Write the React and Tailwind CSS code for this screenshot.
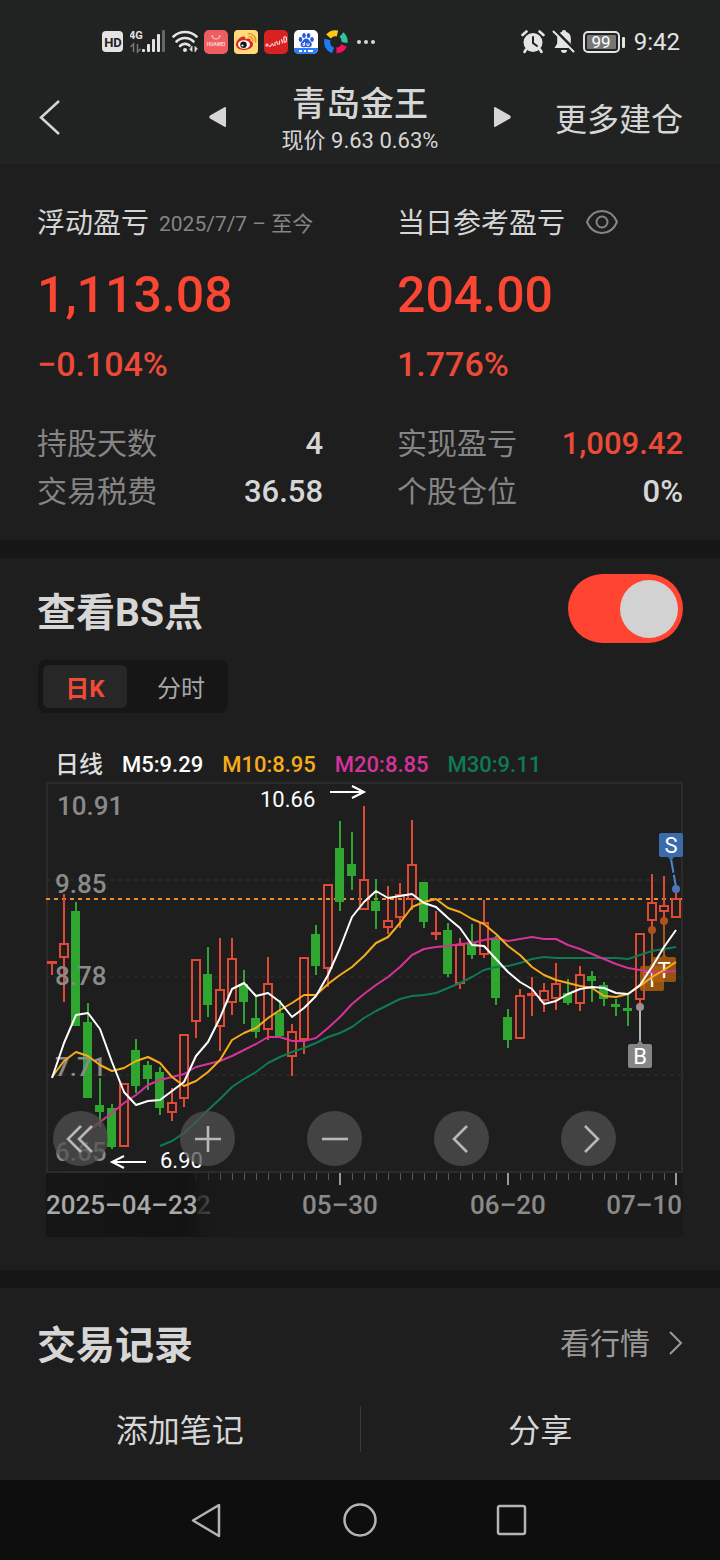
import React, { useState } from "react";

// x, high, body top, body bottom, low, 1 = rise (hollow red) / 0 = fall (green)
const candles = [
  [52, 961, 961, 964, 975, 1],
  [64, 894, 943, 958, 1002, 1],
  [76, 902, 911, 1026, 1026, 0],
  [88, 1003, 1022, 1098, 1098, 0],
  [100, 1078, 1105, 1112, 1127, 0],
  [112, 1104, 1108, 1147, 1149, 0],
  [124, 1083, 1083, 1147, 1147, 1],
  [136, 1039, 1050, 1086, 1093, 0],
  [148, 1061, 1065, 1079, 1090, 0],
  [160, 1067, 1072, 1108, 1115, 0],
  [172, 1088, 1102, 1113, 1121, 1],
  [184, 1034, 1034, 1099, 1107, 1],
  [196, 959, 959, 1022, 1038, 1],
  [208, 947, 974, 1005, 1017, 0],
  [220, 938, 989, 1027, 1051, 1],
  [232, 938, 958, 1003, 1015, 1],
  [244, 970, 984, 1002, 1024, 0],
  [256, 995, 1018, 1032, 1038, 0],
  [268, 957, 983, 1030, 1040, 1],
  [280, 1000, 1013, 1036, 1036, 0],
  [292, 1024, 1031, 1057, 1076, 1],
  [304, 957, 957, 1040, 1054, 1],
  [316, 925, 934, 966, 975, 0],
  [328, 884, 884, 969, 987, 1],
  [340, 821, 848, 902, 911, 0],
  [352, 832, 864, 876, 890, 0],
  [364, 806, 879, 910, 910, 1],
  [376, 879, 901, 911, 929, 0],
  [388, 886, 920, 928, 934, 1],
  [400, 883, 894, 918, 928, 1],
  [412, 820, 864, 900, 910, 1],
  [424, 882, 882, 922, 928, 0],
  [436, 911, 932, 935, 940, 1],
  [448, 923, 930, 974, 977, 0],
  [460, 938, 944, 984, 989, 1],
  [472, 924, 942, 955, 959, 0],
  [484, 900, 922, 955, 958, 1],
  [496, 936, 938, 998, 1005, 0],
  [508, 1009, 1017, 1040, 1048, 0],
  [520, 989, 995, 1039, 1039, 1],
  [532, 977, 993, 996, 1016, 1],
  [544, 983, 990, 1001, 1012, 1],
  [556, 963, 983, 999, 1010, 1],
  [568, 979, 993, 1003, 1005, 0],
  [580, 966, 974, 1004, 1011, 1],
  [592, 971, 976, 981, 1002, 0],
  [604, 982, 985, 999, 1006, 0],
  [616, 999, 1004, 1007, 1016, 0],
  [628, 995, 1008, 1011, 1026, 0],
  [640, 933, 933, 1000, 1006, 1],
  [652, 874, 902, 921, 929, 1],
  [664, 876, 905, 912, 921, 1],
  [676, 890, 898, 918, 918, 1],
];

// moving averages, one value per candle from the start x on
const averages = [
  {
    color: "#0e7a56",
    start: 160,
    ys: [1146, 1141, 1133, 1122, 1110, 1099, 1087, 1079, 1072, 1063, 1057, 1052, 1048, 1043, 1037, 1033, 1027, 1018, 1011, 1005, 999, 996, 995, 993, 988, 983, 977, 970, 967, 966, 963, 959, 957, 958, 958, 958, 958, 958, 958, 959, 955, 951, 949, 947],
  },
  {
    color: "#d6329a",
    start: 88,
    ys: [1131, 1122, 1113, 1103, 1095, 1085, 1080, 1077, 1074, 1067, 1064, 1061, 1056, 1050, 1044, 1037, 1037, 1041, 1041, 1038, 1028, 1017, 1004, 994, 985, 977, 967, 955, 949, 947, 946, 944, 943, 940, 938, 941, 939, 937, 939, 939, 945, 949, 954, 959, 964, 968, 970, 972, 972, 971],
  },
  {
    color: "#f7ac1c",
    start: 52,
    ys: [1077, 1061, 1052, 1056, 1065, 1071, 1068, 1061, 1057, 1063, 1077, 1086, 1081, 1072, 1060, 1040, 1033, 1028, 1018, 1010, 1003, 995, 995, 984, 975, 967, 956, 943, 937, 923, 907, 902, 899, 908, 912, 919, 924, 934, 946, 955, 967, 975, 980, 983, 986, 988, 996, 997, 994, 986, 977, 970, 962],
  },
  {
    color: "#ffffff",
    start: 52,
    ys: [1078, 1043, 1015, 1013, 1029, 1062, 1092, 1105, 1101, 1100, 1091, 1082, 1056, 1042, 1018, 989, 983, 996, 993, 1002, 1017, 1008, 996, 975, 948, 917, 902, 891, 898, 896, 894, 903, 907, 918, 928, 945, 946, 959, 972, 982, 989, 1004, 1001, 994, 989, 987, 988, 993, 994, 985, 967, 947, 930],
  },
];

const priceLabels = [
  ["10.91", 57, 815],
  ["9.85", 55, 893],
  ["8.78", 55, 985],
  ["7.71", 55, 1076],
  ["6.65", 55, 1161],
];

const ticks = Array.from({ length: 41 }, (_, i) => 196 + i * 12);
const majorTicks = [340, 508, 676];

const Candle = ({ data }) => {
  const [x, high, top, bottom, low, rise] = data;
  if (!rise) {
    return (
      <g fill="#2fa62f">
        <rect x={x - 1} y={high} width="2" height={low - high} />
        <rect x={x - 5} y={top} width="9" height={bottom - top} />
      </g>
    );
  }
  return (
    <g fill="#e04a35">
      <rect x={x - 1} y={high} width="2" height={top - high} />
      <rect x={x - 1} y={bottom} width="2" height={low - bottom} />
      {bottom - top < 5 ? (
        <rect x={x - 5} y={top} width="10" height={bottom - top} />
      ) : (
        <rect x={x - 4} y={top + 1} width="8" height={bottom - top - 2} fill="none" stroke="#e04a35" strokeWidth="2" />
      )}
    </g>
  );
};

const KLineChart = () => (
  <svg viewBox="46 782 637 456" className="block w-full" role="img" aria-label="日K">
    <defs>
      <linearGradient id="dateFade" x1="0" x2="1">
        <stop offset="0" stopColor="#161616" />
        <stop offset="0.75" stopColor="#131313" />
        <stop offset="1" stopColor="#1a1a1a" stopOpacity="0" />
      </linearGradient>
    </defs>

    <rect x="47" y="783" width="635" height="389" fill="none" stroke="#2b2b2b" strokeWidth="2" />
    {[880, 977, 1075].map((y) => (
      <line key={y} x1="46" x2="682" y1={y} y2={y} stroke="#303030" strokeWidth="1" strokeDasharray="4 4" />
    ))}
    <line x1="46" x2="682" y1="899" y2="899" stroke="#f08c35" strokeWidth="2" strokeDasharray="4 4" />

    {candles.map((c) => (
      <Candle key={c[0]} data={c} />
    ))}

    {/* price scale */}
    <g className="fill-[#8a8a8a] text-[26px] font-medium">
      {priceLabels.map(([text, x, y]) => (
        <text key={text} x={x} y={y}>{text}</text>
      ))}
    </g>

    {/* T markers */}
    <g stroke="#a5591a" strokeWidth="2">
      <line x1="652" x2="652" y1="930" y2="966" />
      <line x1="664" x2="664" y1="921" y2="957" />
    </g>
    <circle cx="652" cy="930" r="4" fill="#b0501c" />
    <circle cx="664" cy="921" r="4" fill="#b0501c" />
    <g className="text-[22px]" textAnchor="middle">
      <path d="M640 968q0-2 2-2h7l3-3 3 3h7q2 0 2 2v21q0 2-2 2h-20q-2 0-2-2z" fill="#b3600f" fillOpacity="0.8" />
      <text x="652" y="987" fill="#fff">T</text>
      <path d="M652 959q0-2 2-2h7l3-3 3 3h7q2 0 2 2v21q0 2-2 2h-20q-2 0-2-2z" fill="#b3600f" fillOpacity="0.8" />
      <text x="664" y="978" fill="#fff">T</text>
    </g>

    {averages.map((line) => (
      <polyline
        key={line.color}
        points={line.ys.map((y, i) => `${line.start + i * 12},${y}`).join(" ")}
        fill="none"
        stroke={line.color}
        strokeWidth="2"
        strokeLinejoin="round"
      />
    ))}

    {/* B and S markers */}
    <line x1="640" x2="640" y1="1007" y2="1042" stroke="#b4b4b4" strokeWidth="2" />
    <circle cx="640" cy="1007" r="4" fill="#a08c8c" />
    <path d="M628 1046q0-2 2-2h7l3-4 3 4h7q2 0 2 2v20q0 2-2 2h-20q-2 0-2-2z" fill="#868686" />
    <line x1="671" x2="676" y1="859" y2="887" stroke="#4c87d6" strokeWidth="2" strokeDasharray="14 2" />
    <circle cx="676" cy="889" r="4" fill="#4a76b8" />
    <path d="M659 835q0-2 2-2h20q2 0 2 2v20q0 2-2 2h-7l-3 4-3-4h-7q-2 0-2-2z" fill="#3a6cab" />
    <g className="fill-white text-[22px]" textAnchor="middle">
      <text x="640" y="1064">B</text>
      <text x="671" y="853">S</text>
    </g>

    {/* highest and lowest price */}
    <g className="fill-white text-[22px]">
      <text x="260" y="807">10.66</text>
      <text x="160" y="1168">6.90</text>
    </g>
    <g fill="none" stroke="#fff" strokeWidth="2">
      <path d="M330 792h34M352 786l12 6l-12 6" />
      <path d="M146 1162h-34M124 1156l-12 6l12 6" />
    </g>

    {/* date axis */}
    <rect x="46" y="1173" width="637" height="64" fill="#1a1a1a" />
    {ticks.map((x) =>
      majorTicks.includes(x) ? (
        <rect key={x} x={x - 1} y="1173" width="2" height="12" fill="#9a9a9a" />
      ) : (
        <rect key={x} x={x} y="1173" width="1" height="7" fill="#5a5a5a" />
      )
    )}
    <text x="196" y="1214" className="fill-[#6a6a6a] text-[26px] font-medium">2</text>
    <rect x="46" y="1173" width="184" height="64" fill="url(#dateFade)" />
    <g className="fill-[#8a8a8a] text-[26px] font-medium">
      <text x="46" y="1214" className="fill-[#a8a8a8]">2025–04–23</text>
      <text x="340" y="1214" textAnchor="middle">05–30</text>
      <text x="508" y="1214" textAnchor="middle">06–20</text>
      <text x="682" y="1214" textAnchor="end">07–10</text>
    </g>
  </svg>
);

const StatusBar = () => (
  <div className="flex h-[84px] items-center justify-between pr-10 pl-[102px] text-[#e4e4e4]">
    <div className="flex items-center gap-1.5">
      <svg width="22" height="24" viewBox="0 0 22 24">
        <rect x="0" y="1" width="21" height="21" rx="4" fill="#e4e4e4" />
        <text x="11" y="17" textAnchor="middle" className="fill-[#212322] text-[13px] font-bold">HD</text>
      </svg>
      <svg width="36" height="26" viewBox="0 0 36 26">
        <text x="-1" y="10" className="fill-[#e4e4e4] text-[11px] font-bold">4G</text>
        <path d="M3.500 23v-8l-3 3M7.500 15v8l3-3" fill="none" stroke="#777" strokeWidth="1.500" />
        <g fill="#e4e4e4">
          <rect x="12" y="20" width="3" height="3" rx="1" />
          <rect x="17" y="15" width="3" height="8" rx="1" />
          <rect x="22" y="10" width="3" height="13" rx="1" />
          <rect x="27" y="5" width="3" height="18" rx="1" />
        </g>
        <rect x="32" y="1" width="3" height="22" rx="1" fill="#666" />
      </svg>
      <svg width="26" height="24" viewBox="0 0 26 24" fill="none" stroke="#e4e4e4" strokeWidth="2.600" strokeLinecap="round">
        <path d="M1.500 6.500a17 17 0 0 1 23 0" />
        <path d="M4.500 11.500a12 12 0 0 1 17 0" />
        <path d="M8 16a7 7 0 0 1 9.500-.5" />
        <circle cx="13" cy="20" r="1" fill="#e4e4e4" strokeWidth="2" />
        <path d="M20 16.500v5l-2-2zM23 21.500v-5l2 2z" fill="#e4e4e4" strokeWidth="0.800" />
      </svg>
      <svg width="24" height="24" viewBox="0 0 24 24">
        <rect width="24" height="24" rx="5" fill="#ee5d5f" />
        <path d="M8 5a4 4 0 0 0 8 0" fill="none" stroke="#fbd0d0" strokeWidth="1.200" />
        <text x="12" y="16" textAnchor="middle" className="fill-[#fbd5d5] text-[5px] font-bold">HUAWEI</text>
      </svg>
      <svg width="24" height="24" viewBox="0 0 24 24">
        <rect width="24" height="24" rx="4" fill="#ffdc77" />
        <path d="M2 14.500C2 11 6 6.500 9.500 6.500c2 0 2.200 1.500 1.700 2.800C14 8 17 8 16.500 11c2.500.8 2.500 2.500 2.500 3.500 0 3-4.500 5.500-9 5.500s-8-2.200-8-5.500z" fill="#dd2521" />
        <ellipse cx="10" cy="14.500" rx="6" ry="4.200" fill="#fff" />
        <circle cx="9.500" cy="14.700" r="3.200" fill="#111" />
        <circle cx="8.500" cy="15.500" r="1.100" fill="#fff" />
        <path d="M14.500 3.500a7 7 0 0 1 7 8.500M15 6.500a4 4 0 0 1 3.800 4.500" fill="none" stroke="#f0932a" strokeWidth="1.600" strokeLinecap="round" />
      </svg>
      <svg width="24" height="24" viewBox="0 0 24 24">
        <rect width="24" height="24" rx="5" fill="#da2122" />
        <g fill="none" stroke="#fbdada" strokeWidth="1.200" strokeLinecap="round">
          <circle cx="3" cy="15" r="1" />
          <path d="M5.500 16.500l2-1.500M8 13.500l1.500 2M11 12.500v3M12.500 11.500l1.500 3M15.500 11v3M17.500 9.500l1 3.500" />
          <path d="M20 7q2.500-1 2.500 2t-1.500 3.500q-1.500 0-1-5.500z" />
        </g>
      </svg>
      <svg width="24" height="24" viewBox="0 0 24 24">
        <rect width="24" height="24" rx="5" fill="#fff" />
        <path d="M0 18h24v1a5 5 0 0 1-5 5H5a5 5 0 0 1-5-5z" fill="#2f7df6" />
        <g fill="#2859d8">
          <ellipse cx="6.500" cy="9.500" rx="1.800" ry="2.400" />
          <ellipse cx="10" cy="5.500" rx="1.800" ry="2.500" />
          <ellipse cx="14.500" cy="5.500" rx="1.800" ry="2.500" />
          <ellipse cx="18" cy="9.500" rx="1.800" ry="2.400" />
          <path d="M12.200 8.500c2.300 0 3 2.200 4.500 3.600 1.800 1.700 1.500 5-1.500 5.100-1.200 0-1.800-.3-3-.3s-1.800.3-3 .3c-3-.1-3.300-3.400-1.500-5.100 1.500-1.400 2.200-3.600 4.500-3.600z" />
        </g>
        <path d="M10.500 12v3.500h-1.500v-2h1.500M13 13v2.500h2V13" fill="none" stroke="#fff" strokeWidth="0.900" />
        <path d="M5 21h3M10 21h2M14 21h5" stroke="#fff" strokeWidth="2" />
      </svg>
      <svg width="24" height="24" viewBox="0 0 24 24" fill="none" strokeWidth="6">
        <path d="M4.500 6.500A9 9 0 0 1 13.500 3.500" stroke="#ffc814" />
        <path d="M17.500 4.500A9 9 0 0 1 20.500 12.500" stroke="#2fc79a" />
        <path d="M20 15.500A9 9 0 0 1 12.500 20.500" stroke="#f5105c" />
        <path d="M3.500 9.500A9 9 0 0 0 9 20.500" stroke="#1f7cf0" />
        <circle cx="12" cy="12" r="5" fill="#212322" />
      </svg>
      <svg width="24" height="24" viewBox="0 0 24 24" fill="#d8d8d8">
        <circle cx="5" cy="12" r="2" />
        <circle cx="12" cy="12" r="2" />
        <circle cx="19" cy="12" r="2" />
      </svg>
    </div>
    <div className="flex items-center gap-[7px]">
      <svg width="24" height="24" viewBox="0 0 24 24">
        <circle cx="12" cy="12.500" r="9.500" fill="#e4e4e4" />
        <path d="M1.500 5l4-3.500M22.500 5l-4-3.500M5 19.500l-1.500 2.500M19 19.500l1.500 2.500" stroke="#e4e4e4" strokeWidth="2.600" strokeLinecap="round" />
        <path d="M12 7v6l4 3" fill="none" stroke="#212322" strokeWidth="2" strokeLinecap="round" />
      </svg>
      <svg width="24" height="24" viewBox="0 0 24 24">
        <path d="M12 0c1.500 0 2 .8 2 1.800 3 .8 4.800 3.200 4.800 6.200v5.500l2.700 4.500H2.500l2.700-4.500V8c0-3 1.800-5.400 4.800-6.200C10 .8 10.500 0 12 0zM9 20h6a3 3 0 0 1-6 0z" fill="#e4e4e4" />
        <path d="M3 .5l20 20" stroke="#212322" strokeWidth="3.500" />
        <path d="M1.500 1.500l20 20" stroke="#e4e4e4" strokeWidth="2" strokeLinecap="round" />
      </svg>
      <svg width="44" height="24" viewBox="0 0 44 24">
        <rect x="1" y="2" width="35" height="20" rx="4" fill="none" stroke="#e4e4e4" strokeWidth="2" />
        <rect x="4" y="5" width="29" height="14" rx="1" fill="#777" />
        <rect x="39" y="7" width="3" height="11" rx="1" fill="#e4e4e4" />
        <text x="18" y="18" textAnchor="middle" className="fill-white text-[17px]">99</text>
      </svg>
      <span className="text-2xl">9:42</span>
    </div>
  </div>
);

const Header = () => (
  <header className="grid h-20 grid-cols-[1fr_auto_1fr] items-start px-[37px] text-[#d6d6d6]">
    <button type="button" aria-label="返回" className="mt-4 justify-self-start">
      <svg width="24" height="36" viewBox="0 0 24 36" fill="none" stroke="currentColor" strokeWidth="2.500">
        <path d="M22 1L4 17.500L22 34" />
      </svg>
    </button>
    <div className="flex w-[302px] justify-between">
      <button type="button" aria-label="上一个" className="mt-[22px] self-start">
        <svg width="17" height="22" viewBox="0 0 17 22" fill="currentColor">
          <path d="M17 2v18q0 1.500-1.500.8L1 12.500q-1.500-1.500 0-3L15.500 1.200Q17 .5 17 2z" />
        </svg>
      </button>
      <div className="text-center">
        <h1 className="text-[34px] leading-[40px] font-medium">青岛金王</h1>
        <p className="text-[22px] leading-[34px]">现价 9.63 0.63%</p>
      </div>
      <button type="button" aria-label="下一个" className="mt-[22px] self-start">
        <svg width="17" height="22" viewBox="0 0 17 22" fill="currentColor">
          <path d="M0 2v18q0 1.500 1.500.8L16 12.500q1.500-1.500 0-3L1.500 1.200Q0 .5 0 2z" />
        </svg>
      </button>
    </div>
    <button type="button" className="mt-3 justify-self-end text-[32px] leading-[48px]">更多建仓</button>
  </header>
);

const Stat = ({ label, value, color = "text-[#d6d6d6]" }) => (
  <div className="flex items-center justify-between leading-[48px]">
    <dt className="text-[30px] text-[#858585]">{label}</dt>
    <dd className={`text-[31px] font-medium ${color}`}>{value}</dd>
  </div>
);

const Summary = () => (
  <section className="grid grid-cols-2 pt-[38px] pb-6">
    <div className="px-[37px]">
      <h2 className="flex items-center text-[28px] leading-[44px]">
        浮动盈亏
        <span className="ml-2.5 text-[21px] text-[#858585]">2025/7/7 – 至今</span>
      </h2>
      <p className="mt-3.5 text-[50px] leading-[70px] font-medium text-[#fa4632]">1,113.08</p>
      <p className="mt-2.5 text-[34px] leading-[48px] font-medium text-[#ec4a38]">−0.104%</p>
      <dl className="mt-8">
        <Stat label="持股天数" value="4" />
        <Stat label="交易税费" value="36.58" />
      </dl>
    </div>
    <div className="px-[37px]">
      <h2 className="flex items-center text-[28px] leading-[44px]">
        当日参考盈亏
        <button type="button" aria-label="显示" className="mb-1 ml-5">
          <svg width="34" height="26" viewBox="0 0 34 26" fill="none" stroke="#858585" strokeWidth="2">
            <path d="M2 13C5 6 10 2 17 2s12 4 15 11c-3 7-8 11-15 11S5 20 2 13z" />
            <circle cx="17" cy="13" r="5.500" />
          </svg>
        </button>
      </h2>
      <p className="mt-3.5 text-[50px] leading-[70px] font-medium text-[#fa4632]">204.00</p>
      <p className="mt-2.5 text-[34px] leading-[48px] font-medium text-[#ec4a38]">1.776%</p>
      <dl className="mt-8">
        <Stat label="实现盈亏" value="1,009.42" color="text-[#ec4a38]" />
        <Stat label="个股仓位" value="0%" />
      </dl>
    </div>
  </section>
);

const RoundButton = ({ label, d }) => (
  <button
    type="button"
    aria-label={label}
    className="flex h-[55px] w-[55px] items-center justify-center rounded-full bg-[#505050]/75"
  >
    <svg width="32" height="32" viewBox="0 0 32 32" fill="none" stroke="#b8b8b8" strokeWidth="2.600">
      <path d={d} />
    </svg>
  </button>
);

const BSSection = () => {
  const [showBS, setShowBS] = useState(true);
  const [tab, setTab] = useState("day");

  const tabClass = (name) =>
    tab === name
      ? "h-[43px] w-[84px] rounded-md bg-[#272727] pt-1 font-bold text-[#f04a38]"
      : "h-[43px] w-[84px] rounded-md pt-1 text-[#a8a8a8]";

  return (
    <section className="pt-4 pb-8">
      <div className="flex items-center justify-between px-[37px]">
        <label htmlFor="bs" className="pt-2 text-[39px] leading-[58px] font-bold">查看BS点</label>
        <input
          id="bs"
          type="checkbox"
          checked={showBS}
          onChange={(e) => setShowBS(e.target.checked)}
          className="flex h-[69px] w-[115px] appearance-none items-center rounded-full bg-[#444] px-[5px] before:h-[58px] before:w-[58px] before:rounded-full before:bg-[#d2d2d2] checked:justify-end checked:bg-[#ff4432]"
        />
      </div>

      <div className="mt-[17px] ml-[38px] inline-flex gap-3 rounded-lg bg-[#161616] p-[5px] text-2xl">
        <button type="button" className={tabClass("day")} onClick={() => setTab("day")}>日K</button>
        <button type="button" className={tabClass("time")} onClick={() => setTab("time")}>分时</button>
      </div>

      <div className="mt-[35px] flex gap-[19px] pl-[55px] text-[22px] leading-[34px] font-medium">
        <span className="text-2xl leading-[34px] text-[#dcdcdc]">日线</span>
        <span className="text-white">M5:9.29</span>
        <span className="text-[#f7ac1c]">M10:8.95</span>
        <span className="text-[#d6329a]">M20:8.85</span>
        <span className="text-[#0e7a56]">M30:9.11</span>
      </div>

      <div className="pr-[37px] pl-[46px]">
        <div className="relative">
          <KLineChart />
          {/* controls over the chart */}
          <div className="absolute bottom-[72px] left-[7px] flex gap-[72px]">
            <RoundButton label="最左" d="M16 3L3 16L16 29M27 3L14 16L27 29" />
            <RoundButton label="放大" d="M16 3v26M3 16h26" />
            <RoundButton label="缩小" d="M3 16h26" />
            <RoundButton label="左移" d="M21 3L8 16L21 29" />
            <RoundButton label="右移" d="M12 3L25 16L12 29" />
          </div>
        </div>
      </div>
    </section>
  );
};

export default function App() {
  return (
    <div className="flex min-h-screen flex-col bg-[#1e1e1e] font-['Roboto','Noto_Sans_CJK_SC',sans-serif] text-[#d6d6d6]">
      <div className="bg-[#212322]">
        <StatusBar />
        <Header />
      </div>
      <Summary />
      <div className="h-[18px] bg-[#161616]" />
      <BSSection />
      <div className="h-[18px] bg-[#161616]" />

      <section className="flex items-center justify-between px-[37px] pt-7 pb-6">
        <h2 className="text-[39px] leading-[60px] font-bold">交易记录</h2>
        <a href="#quote" className="mb-1.5 flex items-center gap-[18px] text-[30px] text-[#9a9a9a]">
          看行情
          <svg width="15" height="26" viewBox="0 0 15 26" fill="none" stroke="currentColor" strokeWidth="2">
            <path d="M2 2L13 13L2 24" />
          </svg>
        </a>
      </section>

      <div className="flex items-center pt-1 pb-6 text-[32px] leading-[46px]">
        <button type="button" className="flex-1 pt-1">添加笔记</button>
        <div className="h-[46px] w-px bg-[#3a3a3a]" />
        <button type="button" className="flex-1 pt-1">分享</button>
      </div>

      <nav className="mt-auto flex h-20 items-center justify-center gap-[118px] bg-[#0e0e0e]">
        <button type="button" aria-label="后退">
          <svg width="34" height="36" viewBox="0 0 34 36" fill="none" stroke="#b4b4b4" strokeWidth="2.500" strokeLinejoin="round">
            <path d="M29 3v31L3 18.500z" />
          </svg>
        </button>
        <button type="button" aria-label="主页">
          <svg width="36" height="36" viewBox="0 0 36 36" fill="none" stroke="#b4b4b4" strokeWidth="2.500">
            <circle cx="18" cy="18" r="15.500" />
          </svg>
        </button>
        <button type="button" aria-label="最近">
          <svg width="34" height="36" viewBox="0 0 34 36" fill="none" stroke="#b4b4b4" strokeWidth="2.500">
            <rect x="2" y="4" width="27" height="28" rx="2" />
          </svg>
        </button>
      </nav>
    </div>
  );
}
